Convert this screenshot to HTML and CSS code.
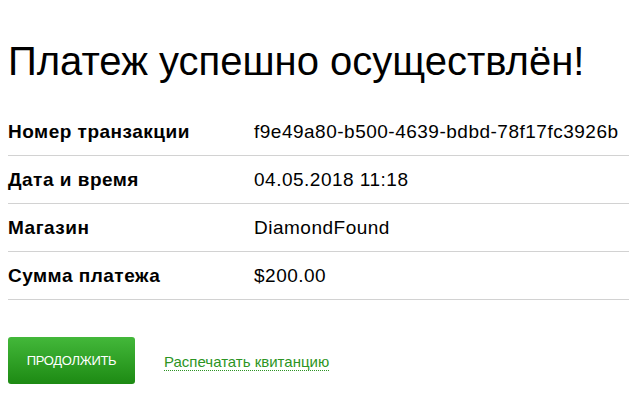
FILE: index.html
```html
<!DOCTYPE html>
<html lang="ru">
<head>
<meta charset="UTF-8">
<title>Платеж успешно осуществлён</title>
<link rel="stylesheet" href="styles.css">
</head>
<body>

<div class="receipt">
    <h1>Платеж успешно осуществлён!</h1>
    <div class="details">
        <div class="row">
            <div class="label">Номер транзакции</div>
            <div class="value">f9e49a80-b500-4639-bdbd-78f17fc3926b</div>
        </div>
        <div class="row">
            <div class="label">Дата и время</div>
            <div class="value">04.05.2018 11:18</div>
        </div>
        <div class="row">
            <div class="label">Магазин</div>
            <div class="value">DiamondFound</div>
        </div>
        <div class="row">
            <div class="label">Сумма платежа</div>
            <div class="value">$200.00</div>
        </div>
    </div>
    <div class="actions">
        <button type="button" class="continue-btn">Продолжить</button>
        <a href="#" class="print-link">Распечатать квитанцию</a>
    </div>
</div>

</body>
</html>
```

FILE: styles.css
```css
* {
    margin: 0;
    padding: 0;
    box-sizing: border-box;
    font-family: 'Liberation Sans', Arial, sans-serif;
}
body {
    background: #fff;
    color: #000;
    padding: 0 5px 0 8px;
}
h1 {
    font-size: 40px;
    font-weight: normal;
    line-height: 46px;
    padding-top: 38px;
    margin-bottom: 24px;
}
.row {
    display: flex;
    align-items: center;
    height: 48px;
    border-bottom: 1px solid #d2d2d2;
    font-size: 19px;
    letter-spacing: 0.5px;
}
.label {
    width: 246px;
    font-weight: bold;
}
.actions {
    display: flex;
    align-items: center;
    gap: 29px;
    margin-top: 37px;
}
.continue-btn {
    width: 127px;
    height: 47px;
    border: none;
    border-radius: 3px;
    background: linear-gradient(#43b83a, #1d8a13);
    color: #fff;
    font-size: 13px;
    letter-spacing: -0.3px;
    text-transform: uppercase;
    cursor: pointer;
}
.print-link {
    color: #2c9424;
    font-size: 15px;
    text-decoration: none;
    border-bottom: 1px dotted #2c9424;
    margin-top: 2px;
}
```
